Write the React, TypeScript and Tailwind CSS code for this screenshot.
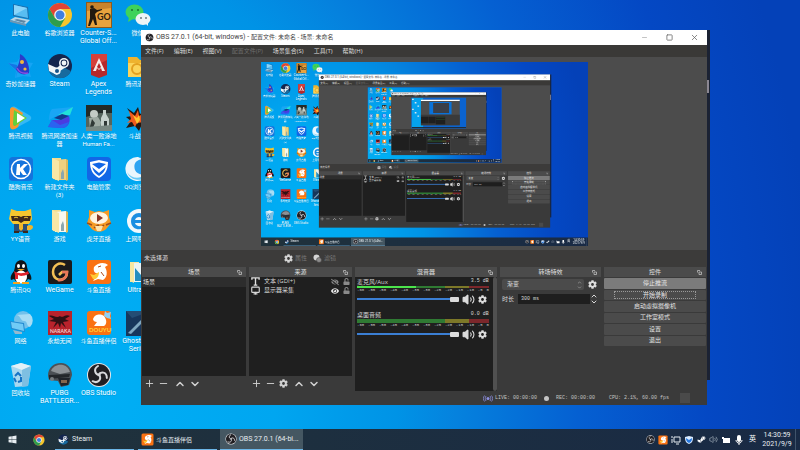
import * as React from "react";
import { FaCog, FaEye, FaEyeSlash, FaSteamSymbol, FaUnlock, FaWindows } from "react-icons/fa";
import { ChevronDown, ChevronUp, Minus, Monitor, Plus, Square, Volume2, X } from "lucide-react";

interface ChildrenProps {
    children: React.ReactNode;
}

interface GlyphProps {
    className?: string;
}

interface ShortcutItem {
    label: string;
    icon: React.ReactElement;
    isLatin?: boolean;
}

interface DesktopProps {
    depth: number;
}

const Art = (props: ChildrenProps & GlyphProps): React.ReactElement => (
    <svg viewBox="0 0 26 26" className={props.className ?? "size-[26px]"} aria-hidden="true">
        {props.children}
    </svg>
);

const ComputerIcon = (): React.ReactElement => (
    <Art>
        <path d="M5 2l15 3 1 12-16-3z" fill="#1c6fae" />
        <path d="M6 3l13 3 1 10-14-3z" fill="#58bdf2" />
        <path d="M6 3l13 3-13 7z" fill="#8ad5fa" />
        <path d="M2 18l5-3 15 3-4 4z" fill="#b9d5e6" />
        <path d="M2 18l16 4v2L2 20z" fill="#6f97b3" />
        <path d="M6 18l3-1 9 2-2 2z" fill="#5b86a4" />
    </Art>
);

const ChromeIcon = (props: GlyphProps): React.ReactElement => (
    <Art className={props.className}>
        <circle cx="13" cy="13" r="12" fill="#f7c52c" />
        <path d="M2.6 7A12 12 0 0 1 23.4 7H13L7.8 16z" fill="#e14436" />
        <path d="M2.6 7A12 12 0 0 0 13 25l5.2-9H7.8z" fill="#2d9d4e" />
        <circle cx="13" cy="13" r="5.8" fill="#f4f4f4" />
        <circle cx="13" cy="13" r="4.5" fill="#3f7fe0" />
    </Art>
);

const CounterStrikeIcon = (): React.ReactElement => (
    <Art>
        <rect width="26" height="26" y="0" fill="#8f5a1c" />
        <rect x="1" y="1" width="24" height="24" fill="#e8a33e" />
        <path d="M1 1h24v5L1 9z" fill="#c8832d" />
        <circle cx="6" cy="5" r="1.8" fill="#221a10" />
        <path d="M4 7l4-1 3 2 5-1v1l-5 2-2 2 1 4 1 7H9L7 17l-3 7H2l2-8z" fill="#221a10" />
        <text x="11" y="18" fontSize="9" fontWeight="bold" fill="#2d2010" fontFamily="Lato, sans-serif">
            GO
        </text>
    </Art>
);

const WeChatIcon = (): React.ReactElement => (
    <Art>
        <ellipse cx="9.5" cy="10" rx="9" ry="7.5" fill="#3fd25b" />
        <path d="M4 15l-1 5 5-3z" fill="#3fd25b" />
        <ellipse cx="18" cy="17" rx="7.5" ry="6" fill="#eef4f6" />
        <path d="M20 21l3 3v-5z" fill="#eef4f6" />
        <circle cx="7" cy="8" r="1" fill="#1b7032" />
        <circle cx="13" cy="8" r="1" fill="#1b7032" />
        <circle cx="16" cy="16" r="1" fill="#6d7a80" />
        <circle cx="21" cy="16" r="1" fill="#6d7a80" />
    </Art>
);

const BoosterIcon = (): React.ReactElement => (
    <Art>
        <path d="M0 10l9-1 3-5 5 5 8 1-4 7 2 7-8-1-8 2 1-7z" fill="#16a4f4" />
        <path d="M0 10l9 2 1 4-2 9 1-7z" fill="#1475e6" />
        <path d="M12 1c6 3 10 11 9 19-5 3-11 1-13-4 3-4 4-9 4-15z" fill="#2b3bc8" />
        <circle cx="14" cy="9" r="2" fill="#f2b63d" />
        <circle cx="17" cy="16" r="1.6" fill="#f2b63d" />
        <path d="M9 15c2 4 6 6 11 5" fill="none" stroke="#8a4de0" strokeWidth="1.5" />
    </Art>
);

const SteamIcon = (props: GlyphProps): React.ReactElement => (
    <Art className={props.className}>
        <circle cx="13" cy="13" r="12" fill="#14264f" />
        <path d="M2 18a12 12 0 0 0 22 0L14 13z" fill="#176a9e" />
        <path d="M1 11l9 4 5-5 4 4-6 4-3 4-8-4z" fill="#f2f6f8" />
        <circle cx="17" cy="10" r="5" fill="#f2f6f8" />
        <circle cx="17" cy="10" r="3.4" fill="#14264f" />
        <circle cx="17" cy="10" r="2.4" fill="#f2f6f8" />
        <circle cx="10" cy="18" r="3.6" fill="#f2f6f8" />
        <circle cx="10" cy="18" r="2" fill="#17548a" />
    </Art>
);

const ApexIcon = (): React.ReactElement => (
    <Art>
        <path d="M5 1h16v21l-8 3-8-3z" fill="#b6282b" />
        <path d="M5 1h16v6L5 15z" fill="#d5403b" />
        <path d="M13 5l6 13h-3l-1-3-2 2-2-2-1 3H7z" fill="#f6ecec" />
        <path d="M13 10l2 4-2 2-2-2z" fill="#b6282b" />
    </Art>
);

const FolderIcon = (props: { paper: string }): React.ReactElement => (
    <Art>
        <path d="M5 2h9v22l-8-1z" fill="#f4dc8e" />
        <path d="M8 4l11-1v21H8z" fill={props.paper} />
        <path d="M5 2l7 3v20l-7-3z" fill="#f8e7a6" />
        <path d="M19 3l2 1v20l-2 1z" fill="#d9b95c" />
        <path d="M14 17l2-4 1 4v6h-3z" fill="#8ba7ae" />
    </Art>
);

const ClassroomIcon = (): React.ReactElement => (
    <Art>
        <path d="M3 4h9l3 3h10v17H3z" fill="#eeb32f" />
        <path d="M3 10h22v14H3z" fill="#fbd45a" />
        <circle cx="12" cy="16" r="5" fill="none" stroke="#e2a020" strokeWidth="2" />
    </Art>
);

const VideoIcon = (): React.ReactElement => (
    <Art>
        <path d="M3 3c1-2 4-2 6 0l12 7c3 2 3 4 0 6L8 23c-3 2-5 1-5-2z" fill="#35b8f5" />
        <path d="M2 4c1-2 3-2 5-1l8 5-5 14-3 2c-3 1-5 0-5-3z" fill="#f6992d" />
        <path d="M6 5l13 8-12 8c-2 0-2-2-2-3z" fill="#62cf3c" />
        <path d="M9 8l8 5-8 5z" fill="#fff" />
    </Art>
);

const GameBoosterIcon = (): React.ReactElement => (
    <Art>
        <path d="M5 4l21-2-3 8H11l-9 5c0-5 1-9 3-11z" fill="#19a6f5" />
        <path d="M26 2l-3 8H11z" fill="#21e0d8" />
        <path d="M1 22l4-7h9l8-4c2 6-1 12-7 12z" fill="#4a3be0" />
        <path d="M1 22l4-7 8 5 9-3c-2 5-5 6-8 6z" fill="#2a63f0" />
        <path d="M7 13l8-4 7 2-8 4z" fill="#12398d" />
    </Art>
);

const HumanFallIcon = (): React.ReactElement => (
    <Art>
        <rect width="26" height="26" fill="#55645c" />
        <path d="M0 0h26v8H14L0 12z" fill="#232b28" />
        <path d="M17 5h3v4l3 5v8h-8v-9l2-4z" fill="#c6d1cc" />
        <circle cx="8" cy="9" r="4" fill="#c3cbc5" />
        <path d="M3 13l9-1 3 5-1 8H4z" fill="#9eaaa2" />
        <path d="M6 14l3 4-3 7H3zM18 16h3v6h-3z" fill="#303936" />
        <path d="M0 22l26-2v6H0z" fill="#7a8983" />
    </Art>
);

const WarriorIcon = (): React.ReactElement => (
    <Art>
        <path d="M2 3l7 5 4-6 2 7 8-5-4 9 6 3-8 3-3 7-4-5-9 2 5-7-5-4 6-1z" fill="#26170f" />
        <path d="M4 6l6 5 3-6 1 6 6-3-4 7 3 2-7 1-2 4-3-5-5 1 4-4z" fill="#f15a1c" />
        <path d="M8 10l4 3 2-3 1 5-3 4z" fill="#ffc52e" />
    </Art>
);

const KugouIcon = (): React.ReactElement => (
    <Art>
        <rect x="1" y="1" width="24" height="24" rx="4" fill="#1473dc" />
        <circle cx="13" cy="13" r="9.5" fill="none" stroke="#fff" strokeWidth="1.6" />
        <path d="M9 8h3v4l4-4h4l-5 5 4 6h-4l-3-4v4H8z" fill="#fff" />
    </Art>
);

const GuardIcon = (): React.ReactElement => (
    <Art>
        <rect x="1" y="1" width="24" height="24" rx="4" fill="#1266e6" />
        <path d="M4 6l9-2 9 2c0 8-3 13-9 16C7 19 4 14 4 6z" fill="#fff" />
        <path d="M6 8l7-1.5L20 8c0 5-2 9-7 12-5-3-7-7-7-12z" fill="#1266e6" />
        <path d="M6 8l7 5 7-5v3l-7 6-7-6z" fill="#fff" />
    </Art>
);

const BrowserIcon = (): React.ReactElement => (
    <Art>
        <circle cx="13" cy="13" r="12" fill="#2da4f2" />
        <path d="M13 1a12 12 0 1 0 11 15c-4 4-12 3-14-2-2-6 1-10 7-11z" fill="#e9f6fd" />
        <path d="M2 16c3 5 9 7 14 5l6-1a12 12 0 0 1-20-4z" fill="#68c9f6" />
    </Art>
);

const RaccoonIcon = (): React.ReactElement => (
    <Art>
        <path d="M3 1l6 2h8l6-2 1 10-3 5H5l-4-5z" fill="#f5c62f" />
        <path d="M3 8h8l2 1 2-1h8l-1 5h-6l-3 2-3-2H4z" fill="#402919" />
        <path d="M6 10c1-1 3-1 4 0M16 10c1-1 3-1 4 0" fill="none" stroke="#f5c62f" />
        <path d="M6 16h14v8H6z" fill="#2a4f78" />
        <path d="M11 16h4v5l-2 2-2-2zM19 18c3-2 6-1 6 1s-3 4-6 3z" fill="#f1b52a" />
        <path d="M6 23h5v2H6zM15 23h5v2h-5z" fill="#3b2718" />
    </Art>
);

const HuyaIcon = (): React.ReactElement => (
    <Art>
        <path d="M3 2l6 2 4-1 4 1 6-2v7l2 6-4 5c-4 5-12 5-16 0l-4-5 2-6z" fill="#f59a24" />
        <ellipse cx="13" cy="10" rx="9" ry="6" fill="#fff3df" />
        <path d="M11 6l6 4-6 4z" fill="#8b3526" />
        <path d="M1 15l5 2M25 15l-5 2M8 20l4-3 2 3 4-3" stroke="#9b4d1c" strokeWidth="1.5" fill="none" />
        <path d="M9 18h8l-2 5h-4z" fill="#ffe2a9" />
    </Art>
);

const ExplorerIcon = (): React.ReactElement => (
    <Art>
        <circle cx="14" cy="13" r="12" fill="#f2f8fb" />
        <path d="M6 13a8 8 0 0 1 16 0v2H10c1 4 7 4 9 1h3c-3 8-16 7-16-3zm4-1h8c-1-4-7-4-8 0z" fill="#1b8ee2" />
    </Art>
);

const PenguinIcon = (): React.ReactElement => (
    <Art>
        <path d="M7 8c0-9 12-9 12 0l1 4c3 4 4 6 3 9l-3-1c-3 5-11 5-14 0l-3 1c-1-3 0-5 3-9z" fill="#11151a" />
        <ellipse cx="13" cy="18" rx="6" ry="6.5" fill="#fff" />
        <ellipse cx="10.5" cy="7" rx="1.5" ry="2" fill="#fff" />
        <ellipse cx="15.5" cy="7" rx="1.5" ry="2" fill="#fff" />
        <path d="M9 10h8l-4 2z" fill="#f6a51c" />
        <path d="M6 12c4 3 10 3 14 0l1 3c-3 1-6 2-8 2l-3-1v4H7v-4z" fill="#e2232c" />
        <path d="M5 23h7v2H5zM14 23h7v2h-7z" fill="#f6a51c" />
    </Art>
);

const WeGameIcon = (): React.ReactElement => (
    <Art>
        <rect x="1" y="1" width="24" height="24" rx="2" fill="#1b1a1c" />
        <path d="M18 6C12 2 6 7 6 13s5 9 10 7c3-1 4-4 4-7h-5l-3 3" fill="none" stroke="#f3bf55" strokeWidth="2.5" />
        <path d="M11 21c5 1 9-3 9-8h-5" fill="none" stroke="#e9775a" strokeWidth="2.5" />
    </Art>
);

const DouyuIcon = (props: GlyphProps): React.ReactElement => (
    <Art className={props.className}>
        <rect x="1" y="1" width="24" height="24" rx="3" fill="#fa7213" />
        <path d="M8 8c4-5 11-5 14-2l-3 2c3 5 2 11-2 13l-5-1-5 2c2-3 4-5 5-8-3 1-5-2-4-6z" fill="#fff" />
        <path d="M4 15l4 1 5-3c0 5-3 8-6 7z" fill="#ffcb36" />
        <path d="M12 8l3-1M15 13l3 4" stroke="#ae4a15" strokeWidth="1" />
    </Art>
);

const DouyuCompanionIcon = (): React.ReactElement => (
    <Art>
        <rect x="1" y="1" width="24" height="24" rx="3" fill="#fa7213" />
        <path d="M7 9c2-6 9-5 11-3 3 4 3 8 0 10H8l3-4c-2 0-4-1-4-3z" fill="#fff" />
        <text x="3" y="22" fontSize="6" fontWeight="bold" fill="#ffd23b" fontFamily="Lato, sans-serif">
            DOUYU
        </text>
        <path d="M19 1l2 2 4-1-1 4 1 3-4-1-3-2z" fill="#8fd0f5" />
    </Art>
);

const NotebookIcon = (): React.ReactElement => (
    <Art>
        <path d="M5 3h9v20H5z" fill="#f5e5a5" />
        <path d="M9 4h15v19H9z" fill="#e9f3f6" />
        <path d="M10 22V9l6 7 7-9v15z" fill="#248ec0" />
        <path d="M5 3l4 2v19l-4-2z" fill="#f6e7a1" />
    </Art>
);

const NetworkIcon = (): React.ReactElement => (
    <Art>
        <circle cx="15" cy="10" r="9" fill="#70c1eb" />
        <path d="M8 5c5 0 4 6 8 6s2 5 6 6a9 9 0 0 0 0-13z" fill="#a7ddf5" />
        <path d="M2 11l14 2 1 9-14-3z" fill="#258bd0" />
        <path d="M3 12l12 2 1 7-12-3z" fill="#70cbf6" />
        <path d="M5 20l9 2v2H7z" fill="#99b9cd" />
    </Art>
);

const NarakaIcon = (): React.ReactElement => (
    <Art>
        <rect x="1" y="1" width="24" height="24" fill="#b8232c" />
        <path d="M13 6c3 3 5-3 10 0l-5 3 4 2-6 1 3 6-5-5-1 5-2-5-5 5 3-6-7-1 5-2-5-3c4-2 7 3 11 0z" fill="#301014" />
        <text x="3" y="23" fontSize="5" fontWeight="bold" fill="#f1d0ce" fontFamily="Lato, sans-serif">
            NARAKA
        </text>
    </Art>
);

const GhostIcon = (): React.ReactElement => (
    <Art>
        <rect x="1" y="1" width="25" height="25" fill="#17365b" />
        <path d="M3 23L20 6l3-1-2 4L6 24z" fill="#7fa7c0" />
        <path d="M1 1h25L7 8z" fill="#244d74" />
    </Art>
);

const RecycleBinIcon = (): React.ReactElement => (
    <Art>
        <path d="M3 4l10-3 10 3-3 20-13 1z" fill="#a9d8ef" />
        <path d="M3 4l10-3 10 3-9 4z" fill="#e2f1f8" />
        <path d="M14 8l9-4-3 20-6 1z" fill="#7ebfe2" />
        <path d="M7 14l3-3 3 3M13 15v4l-3 1M8 20l-2-4" fill="none" stroke="#1673c5" strokeWidth="2" />
    </Art>
);

const HelmetIcon = (): React.ReactElement => (
    <Art>
        <path d="M1 14C1 5 7 1 14 1s11 6 11 12l-3 10-8 2-3-6-9-1z" fill="#4b5055" />
        <path d="M4 9c2-5 7-7 12-6 4 1 6 4 7 7L13 12z" fill="#8c9195" />
        <path d="M2 13l21-1-1 3-20 2z" fill="#23272b" />
        <path d="M11 16h12l-2 7-7 1z" fill="#20242a" />
        <path d="M14 18h6v3h-6z" fill="#85654c" />
        <circle cx="5" cy="17" r="2" fill="#777d80" />
    </Art>
);

const ObsIcon = (props: GlyphProps): React.ReactElement => (
    <Art className={props.className}>
        <circle cx="13" cy="13" r="12" fill="#e6e6e8" />
        <circle cx="13" cy="13" r="11" fill="#211f23" />
        <path
            d="M12 4c-5 3-3 9 2 9M20.8 15.9c.2-6-6-7.2-8.6-2.8M6.6 19.2c5.200 2.800 9.300-1.900 6.700-6.300"
            fill="none"
            stroke="#d9d9dc"
            strokeWidth="2"
            strokeLinecap="round"
        />
    </Art>
);

const SHORTCUTS: ShortcutItem[] = [
    { label: "此电脑", icon: <ComputerIcon /> },
    { label: "奇妙加速器", icon: <BoosterIcon /> },
    { label: "腾讯视频", icon: <VideoIcon /> },
    { label: "酷狗音乐", icon: <KugouIcon /> },
    { label: "YY语音", icon: <RaccoonIcon /> },
    { label: "腾讯QQ", icon: <PenguinIcon /> },
    { label: "网络", icon: <NetworkIcon /> },
    { label: "回收站", icon: <RecycleBinIcon /> },
    { label: "谷歌浏览器", icon: <ChromeIcon /> },
    { label: "Steam", icon: <SteamIcon />, isLatin: true },
    { label: "腾讯网游加速\n器", icon: <GameBoosterIcon /> },
    { label: "新建文件夹\n(3)", icon: <FolderIcon paper="#efd080" /> },
    { label: "游戏", icon: <FolderIcon paper="#f8f8ef" /> },
    { label: "WeGame", icon: <WeGameIcon />, isLatin: true },
    { label: "永劫无间", icon: <NarakaIcon /> },
    { label: "PUBG\nBATTLEGR...", icon: <HelmetIcon />, isLatin: true },
    { label: "Counter-S...\nGlobal Off...", icon: <CounterStrikeIcon />, isLatin: true },
    { label: "Apex\nLegends", icon: <ApexIcon />, isLatin: true },
    { label: "人类一败涂地\nHuman Fa...", icon: <HumanFallIcon /> },
    { label: "电脑管家", icon: <GuardIcon /> },
    { label: "虎牙直播", icon: <HuyaIcon /> },
    { label: "斗鱼直播", icon: <DouyuIcon /> },
    { label: "斗鱼直播伴侣", icon: <DouyuCompanionIcon /> },
    { label: "OBS Studio", icon: <ObsIcon />, isLatin: true },
    { label: "微信", icon: <WeChatIcon /> },
    { label: "腾讯课堂", icon: <ClassroomIcon /> },
    { label: "斗战神", icon: <WarriorIcon /> },
    { label: "QQ浏览器", icon: <BrowserIcon /> },
    { label: "上网导航", icon: <ExplorerIcon /> },
    { label: "Ultra...", icon: <NotebookIcon />, isLatin: true },
    { label: "Ghostru...\nSeri...", icon: <GhostIcon />, isLatin: true },
];

const MENU = ["文件(F)", "编辑(E)", "视图(V)", "配置文件(P)", "场景集合(S)", "工具(T)", "帮助(H)"];
const CONTROLS = ["停止推流", "开始录制", "启动虚拟摄像机", "工作室模式", "设置", "退出"];
const DECIBELS = [-60, -55, -50, -45, -40, -35, -30, -25, -20, -15, -10, -5, 0];

const Shortcuts = (): React.ReactElement => (
    <div className="grid h-[411px] w-max auto-cols-[39px] grid-flow-col grid-rows-8 pl-px">
        {SHORTCUTS.map(item => (
            <div key={item.label} className="flex flex-col items-center gap-px pt-0.5">
                {item.icon}
                <span
                    className={`whitespace-pre text-center font-['Roboto','Noto_Sans_CJK_SC',sans-serif] leading-[8px] text-white text-shadow-2xs ${item.isLatin ? "text-[7px]" : "text-[6px]"}`}
                >
                    {item.label}
                </span>
            </div>
        ))}
    </div>
);

const TitleBar = (): React.ReactElement => (
    <header className="flex h-[15px] items-center bg-white pl-1 text-[7px] text-[#444]">
        <ObsIcon className="size-[9px]" />
        <h1 className="grow pl-0.5 font-['Roboto','Noto_Sans_CJK_SC',sans-serif]">
            OBS 27.0.1 (64-bit, windows) - <span className="text-[6px]">配置文件: 未命名 - 场景: 未命名</span>
        </h1>
        <button type="button" aria-label="最小化" className="flex w-[25px] justify-center text-[#999]">
            <Minus size={7} strokeWidth={2} />
        </button>
        <button type="button" aria-label="最大化" className="flex w-[25px] justify-center text-[#777]">
            <Square size={7} strokeWidth={3} />
        </button>
        <button type="button" aria-label="关闭" className="flex w-[25px] justify-center text-[#666]">
            <X size={9} strokeWidth={2} />
        </button>
    </header>
);

const MenuBar = (): React.ReactElement => (
    <nav className="flex h-[12px] items-center gap-[10px] bg-[#3a3937] px-1 text-[6px]">
        {MENU.map(item => (
            <button
                type="button"
                key={item}
                disabled={item === "配置文件(P)"}
                className="text-[#dedede] disabled:text-[#6e6e6e]"
            >
                {item}
            </button>
        ))}
    </nav>
);

const SourceToolbar = (): React.ReactElement => (
    <div className="flex h-[17px] items-center bg-[#3c3b3a] px-[3px]">
        <span className="w-[140px] text-[#d8d8d8]">未选择源</span>
        <button type="button" disabled className="flex items-center gap-0.5 text-[#777]">
            <FaCog className="size-[9px] text-[#d4d4d4]" />
            属性
        </button>
        <button type="button" disabled className="ml-[6px] flex items-center gap-0.5 text-[#777]">
            <svg viewBox="0 0 18 18" className="size-[9px]" aria-hidden="true">
                <circle cx="7" cy="7" r="6" fill="#d4d4d4" />
                <circle cx="12" cy="12" r="5" fill="#8c8c8c" stroke="#3c3b3a" />
            </svg>
            滤镜
        </button>
    </div>
);

const Dock = (props: ChildrenProps & { title: string; className: string }): React.ReactElement => (
    <section className={`flex min-w-0 basis-0 flex-col ${props.className}`}>
        <h2 className="relative flex h-[10px] shrink-0 items-center justify-center bg-[#4b4b4b] text-[#e0e0e0]">
            {props.title}
            <svg viewBox="0 0 10 10" className="absolute right-1 size-[5px]" aria-hidden="true">
                <path d="M1 5V1h5M4 4h5v5H4z" fill="none" stroke="#c4c4c4" strokeWidth="1.5" />
            </svg>
        </h2>
        {props.children}
    </section>
);

const ListActions = (props: { hasSettings?: boolean }): React.ReactElement => (
    <div className="flex h-[15px] shrink-0 items-center gap-[3px] pl-0.5 text-[#d0d0d0]">
        <button type="button" aria-label="添加">
            <Plus size={11} strokeWidth={2} />
        </button>
        <button type="button" aria-label="移除">
            <Minus size={11} strokeWidth={2} />
        </button>
        {props.hasSettings && (
            <button type="button" aria-label="设置">
                <FaCog className="size-[9px]" />
            </button>
        )}
        <button type="button" aria-label="上移" className="ml-0.5">
            <ChevronUp size={12} strokeWidth={3} />
        </button>
        <button type="button" aria-label="下移">
            <ChevronDown size={12} strokeWidth={3} />
        </button>
    </div>
);

const SourceRow = (props: { name: string; icon: React.ReactElement; isVisible: boolean }): React.ReactElement => (
    <li className="flex h-[9px] items-center px-0.5 text-[#d8d8d8]">
        {props.icon}
        <span className="grow pl-1">{props.name}</span>
        <button type="button" aria-label={`可见 ${props.name}`}>
            {props.isVisible ? (
                <FaEye className="size-2 text-[#e6e6e6]" />
            ) : (
                <FaEyeSlash className="size-2 text-[#8a8a8a]" />
            )}
        </button>
        <button type="button" aria-label={`锁定 ${props.name}`} className="ml-1">
            <FaUnlock className="size-[7px] text-[#8a8a8a]" />
        </button>
    </li>
);

const Channel = (props: { name: string; level: string; isActive: boolean }): React.ReactElement => (
    <div className="flex h-[33px] flex-col pr-1 pl-0.5">
        <div className="flex h-[8px] items-center justify-between text-[#d8d8d8]">
            <span>{props.name}</span>
            <span className="font-['Liberation_Mono',monospace] text-[5px]">{props.level}</span>
        </div>
        <div className={`flex ${props.isActive ? "h-0.5" : "h-1"}`}>
            <div className={`w-[45%] ${props.isActive ? "bg-[#4ce44c]" : "bg-[#2f7a33]"}`} />
            <div className="w-[22%] bg-[#2f7a33]" />
            <div className="w-[18%] bg-[#7d7828]" />
            <div className="w-[15%] bg-[#7c272b]" />
        </div>
        <div className="flex h-1 justify-between font-['Liberation_Mono',monospace] text-[4px] leading-[4px] text-[#c9c9c9]">
            {DECIBELS.map(value => (
                <span key={value}>{value}</span>
            ))}
        </div>
        <div className="flex h-[14px] items-center">
            <input
                type="range"
                aria-label={`音量 ${props.name}`}
                defaultValue={100}
                className="h-0.5 min-w-0 grow appearance-none bg-[#3b7fd4] [&::-webkit-slider-thumb]:h-[5px] [&::-webkit-slider-thumb]:w-[9px] [&::-webkit-slider-thumb]:appearance-none [&::-webkit-slider-thumb]:rounded-[1px] [&::-webkit-slider-thumb]:bg-[#dcdcdc]"
            />
            <button type="button" aria-label={`静音 ${props.name}`} className="ml-[3px] text-[#dcdcdc]">
                <Volume2 size={13} strokeWidth={2} className="[&>path:first-child]:fill-current" />
            </button>
            <button type="button" aria-label={`设置 ${props.name}`} className="mr-0.5 ml-[3px] text-[#dcdcdc]">
                <FaCog className="size-[9px]" />
            </button>
        </div>
    </div>
);

const Transitions = (): React.ReactElement => {
    const id = React.useId();
    return (
        <div className="flex flex-col gap-0.5 pt-0.5 pl-0.5 text-[#d8d8d8]">
            <div className="flex items-center">
                <span className="relative flex grow items-center">
                    <select
                        aria-label="转场特效"
                        className="h-[11px] w-full appearance-none rounded-xs bg-[#4b4b4b] pl-[5px]"
                    >
                        <option>渐变</option>
                    </select>
                    <span className="pointer-events-none absolute right-0.5 flex flex-col text-[#aaa]">
                        <ChevronUp size={5} strokeWidth={3} />
                        <ChevronDown size={5} strokeWidth={3} />
                    </span>
                </span>
                <button type="button" aria-label="转场设置" className="mx-1 text-[#dcdcdc]">
                    <FaCog className="size-[9px]" />
                </button>
            </div>
            <div className="flex items-center">
                <label htmlFor={id} className="w-[16px]">
                    时长
                </label>
                <input
                    id={id}
                    defaultValue="300 ms"
                    className="h-[10px] min-w-0 grow bg-[#1e1e1e] pl-[3px] font-['Liberation_Mono',monospace] text-[5px]"
                />
                <span className="mr-[3px] flex flex-col">
                    <button type="button" aria-label="增加">
                        <ChevronUp size={8} strokeWidth={3} className="-mb-0.5" />
                    </button>
                    <button type="button" aria-label="减少">
                        <ChevronDown size={8} strokeWidth={3} />
                    </button>
                </span>
            </div>
        </div>
    );
};

const Controls = (): React.ReactElement => (
    <div className="mt-px grid h-[68px] grid-rows-6 gap-px text-[#e4e4e4]">
        {CONTROLS.map((item, index) => (
            <button
                type="button"
                key={item}
                className={`rounded-[1px] ${index === 0 ? "bg-[#7b7b7b]" : "bg-[#4b4b4b]"}`}
            >
                <span className={index === 1 ? "mx-[10px] block border border-dotted border-[#999] leading-[6px]" : ""}>
                    {item}
                </span>
            </button>
        ))}
    </div>
);

const Docks = (): React.ReactElement => (
    <div className="flex h-[124px] gap-[3px] px-px">
        <Dock title="场景" className="grow-104">
            <ul className="grow bg-[#1f1f1f] text-[#e4e4e4]">
                <li className="flex h-[10px] items-center bg-[#2d2d2d] pl-px">场景</li>
            </ul>
            <ListActions />
        </Dock>
        <Dock title="来源" className="grow-103">
            <ul className="grow bg-[#1f1f1f]">
                <SourceRow
                    name="文本 (GDI+)"
                    isVisible={false}
                    icon={
                        <svg viewBox="0 0 10 10" className="size-[9px]" aria-hidden="true">
                            <path d="M1 3V1h8v2M5 1v8M3 9h4" fill="none" stroke="#e0e0e0" strokeWidth="1.5" />
                        </svg>
                    }
                />
                <SourceRow name="显示器采集" isVisible icon={<Monitor size={9} strokeWidth={3} />} />
            </ul>
            <ListActions hasSettings />
        </Dock>
        <Dock title="混音器" className="grow-142">
            <div className="flex grow bg-[#1f1f1f]">
                <div className="min-w-0 grow pt-px">
                    <Channel name="麦克风/Aux" level="3.5 dB" isActive />
                    <Channel name="桌面音频" level="0.0 dB" isActive={false} />
                </div>
                <div className="w-[5px] rounded-full bg-[#505050]" />
            </div>
        </Dock>
        <Dock title="转场特效" className="grow-101">
            <Transitions />
        </Dock>
        <Dock title="控件" className="grow-102">
            <Controls />
        </Dock>
    </div>
);

const StatusBar = (): React.ReactElement => (
    <footer className="flex h-[14px] items-center justify-end pr-[17px] font-['Liberation_Mono',monospace] text-[5px] text-[#c4c4c4]">
        <svg viewBox="0 0 20 14" className="mr-0.5 h-[7px] w-[10px]" aria-hidden="true">
            <circle cx="10" cy="7" r="3" fill="#8d8fe0" />
            <path
                d="M6 2c-2 3-2 7 0 10M14 2c2 3 2 7 0 10M3 1c-3 4-3 8 0 12M17 1c3 4 3 8 0 12"
                fill="none"
                stroke="#8d8fe0"
                strokeWidth="1.5"
            />
        </svg>
        <span className="leading-[6px]">LIVE: 00:00:00</span>
        <span className="mx-[7px] size-[5px] rounded-full bg-[#c4c4c4]" />
        <span className="leading-[6px]">REC: 00:00:00</span>
        <span className="mr-[11px] ml-[14px] leading-[6px]">CPU: 2.1%, 60.00 fps</span>
        <span className="size-[10px] bg-[#4a4a4a]" />
    </footer>
);

// Deepest level of the nested preview, too small for real content
const Thumbnail = (): React.ReactElement => (
    <svg viewBox="0 0 327 184" className="size-full" aria-hidden="true">
        <path d="M0 0h70v184H0z" fill="#05a2ee" />
        <path d="M4 6h10v8H4zM20 26h10v8H20zM36 46h10v8H36zM4 66h10v8H4zM20 86h10v8H20zM36 106h10v8H36z" fill="#d7e6ee" />
        <path d="M57 12h232v153H57z" fill="#4c4c4c" />
        <path d="M57 12h232v7H57z" fill="#fff" />
        <path d="M107 26h133v74H107z" fill="#0a72d8" />
        <path d="M130 32h95v60h-95z" fill="#3a3f48" />
        <path d="M57 102h232v63H57z" fill="#3a3a3a" />
        <path d="M58 113h42v40H58zM102 113h42v40h-42zM146 113h56v46h-56z" fill="#1f1f1f" />
        <path d="M148 118h52v2h-52zM148 131h52v2h-52z" fill="#2f8a3a" />
        <path d="M0 175h327v9H0z" fill="#1d2e40" />
    </svg>
);

const ObsWindow = (props: DesktopProps): React.ReactElement => (
    <main className="absolute top-[30px] right-[93px] bottom-[45px] left-[141px] flex flex-col bg-[#3a3a3a] text-[6px]">
        <div className="absolute top-0 left-full h-[350px] w-[3px] bg-[#1b2233]" />
        <div className="absolute top-[50px] left-full h-[13px] w-0.5 bg-[#8b8792]" />
        <TitleBar />
        <MenuBar />
        <div className="flex min-h-0 grow items-center justify-center overflow-hidden bg-[#4c4c4c]">
            <div className="h-[184px] w-[327px] overflow-hidden bg-[#0a63d0]">
                {props.depth > 0 ? (
                    <div className="h-[450px] w-[800px] origin-top-left scale-[0.409]" aria-hidden="true" inert>
                        <Desktop depth={props.depth - 1} />
                    </div>
                ) : (
                    <Thumbnail />
                )}
            </div>
        </div>
        <SourceToolbar />
        <Docks />
        <StatusBar />
    </main>
);

const Tray = (): React.ReactElement => (
    <div className="flex items-center gap-[3px] text-white">
        <ObsIcon className="size-[9px]" />
        <DouyuIcon className="size-[10px]" />
        <svg viewBox="0 0 10 10" className="size-[10px]" fill="none" stroke="#e6edf2" aria-hidden="true">
            <path d="M1 1v2M3 2h6v5H3zM5 9h3M1 4v4" />
        </svg>
        <svg viewBox="0 0 10 10" className="size-[10px]" aria-hidden="true">
            <path d="M1 2l4-1 4 1c0 4-1 6-4 7-3-1-4-3-4-7z" fill="#dcecff" />
            <path d="M2 3l3 2 3-2c0 3-1 4-3 5-2-1-3-2-3-5z" fill="#2678df" />
        </svg>
        <FaSteamSymbol className="size-[9px]" />
        <Volume2 size={9} className="text-[#9aa7b3]" />
        <svg viewBox="0 0 10 10" className="size-[10px]" aria-hidden="true">
            <path d="M1 2h2v1h6v5H2V4H1z" fill="#fff" />
        </svg>
        <svg viewBox="0 0 10 10" className="size-[10px]" aria-hidden="true">
            <rect x="3" y="0" width="4" height="7" rx="2" fill="#fff" />
            <path d="M2 5c0 4 6 4 6 0M5 8v2" fill="none" stroke="#fff" />
        </svg>
        <span className="pl-0.5 text-[7px]">英</span>
    </div>
);

const Taskbar = (): React.ReactElement => (
    <footer className="absolute inset-x-0 bottom-0 flex h-[21px] items-stretch bg-linear-to-r from-[#20323b] to-[#192a45] font-['Roboto','Noto_Sans_CJK_SC',sans-serif] text-[7px] text-[#e8eef2]">
        <button type="button" aria-label="开始" className="flex w-[25px] items-center justify-center">
            <FaWindows className="size-[9px]" />
        </button>
        <button type="button" aria-label="Chrome" className="mr-[3px] flex w-[27px] items-center justify-center">
            <ChromeIcon className="size-[12px]" />
        </button>
        <button type="button" className="mr-1 flex w-[79px] items-center gap-[3px] border-b border-[#6db7e8] pl-[3px]">
            <SteamIcon className="size-[11px]" />
            Steam
        </button>
        <button type="button" className="mr-[3px] flex w-[79px] items-center gap-0.5 border-b border-[#6db7e8] pl-[3px]">
            <DouyuIcon className="size-[13px]" />
            <span className="text-[6px]">斗鱼直播伴侣</span>
        </button>
        <button
            type="button"
            className="flex w-[83px] items-center gap-0.5 border-b border-[#6db7e8] bg-[#455762] pl-[5px]"
        >
            <ObsIcon className="size-[12px]" />
            OBS 27.0.1 (64-bi...
        </button>
        <div className="ml-auto flex">
            <Tray />
            <time dateTime="2021-09-09T14:30:59" className="ml-[5px] w-[32px] pt-0.5 text-center leading-[9px]">
                14:30:59
                <br />
                2021/9/9
            </time>
            <span className="mr-1 ml-0.5 w-px bg-[#40536a]" />
        </div>
    </footer>
);

const Desktop = (props: DesktopProps): React.ReactElement => (
    <div className="relative h-full w-full overflow-hidden bg-[radial-gradient(90%_220%_at_12%_85%,#00aff5_0%,#00a6f0_25%,#0093e6_42%,#0582de_50%,#0560d2_67%,#0448c4_85%,#0441b8_100%)] font-['Open_Sans','Noto_Sans_CJK_SC',sans-serif]">
        <Shortcuts />
        <ObsWindow depth={props.depth} />
        <Taskbar />
    </div>
);

export default function App(): React.ReactElement {
    return (
        <div className="h-screen w-full">
            <Desktop depth={2} />
        </div>
    );
}
